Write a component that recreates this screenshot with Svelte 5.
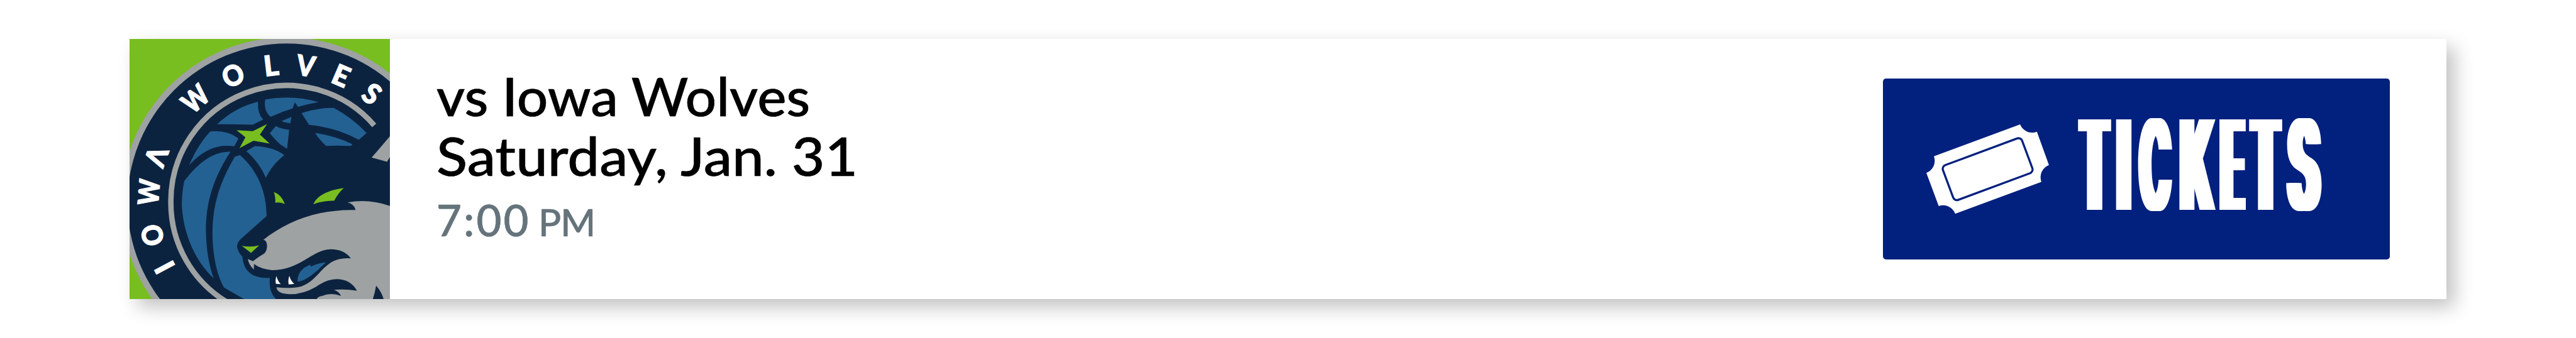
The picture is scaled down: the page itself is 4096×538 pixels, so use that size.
<script lang="ts">
  const event = {
    opponent: "vs Iowa Wolves",
    date: "Saturday, Jan. 31",
    time: "7:00",
    meridiem: "PM",
  };

  // letters around the badge, degrees clockwise from the top
  const letters = [
    { char: "I", angle: -117.9, stretch: 1 },
    { char: "O", angle: -103.6, stretch: 0.93 },
    { char: "W", angle: -85.6, stretch: 0.87 },
    { char: "Λ", angle: -70.5, stretch: 0.95 },
    { char: "W", angle: -41.3, stretch: 0.87 },
    { char: "O", angle: -22.9, stretch: 0.93 },
    { char: "L", angle: -6.5, stretch: 1 },
    { char: "V", angle: 8, stretch: 0.93 },
    { char: "E", angle: 23.2, stretch: 1 },
    { char: "S", angle: 38, stretch: 0.95 },
  ];

  // condensed lettering of the button
  const label = [
    { char: "T", width: 55, gap: 6.5, scale: 0.314 },
    { char: "I", width: 25, gap: 7.5, scale: 0.314 },
    { char: "C", width: 59, gap: 6, scale: 0.325, round: true },
    { char: "K", width: 60.5, gap: 5, scale: 0.36, round: true },
    { char: "E", width: 44, gap: 3.5, scale: 0.285 },
    { char: "T", width: 55, gap: 3.5, scale: 0.314 },
    { char: "S", width: 59, gap: 0, scale: 0.375, round: true },
  ];
</script>

<main>
  <div class="card">
    <svg class="logo" viewBox="33 46 1494 1466" preserveAspectRatio="none">
      <rect class="green" x="33" y="46" width="1494" height="1466" />
      <ellipse class="grey" cx="935" cy="969" rx="949" ry="932" />
      <ellipse class="navy" cx="935" cy="969" rx="914" ry="897" />
      <path
        class="ring"
        d="M1437 533A665 653 0 0 0 270 969A665 653 0 0 0 600 1534"
      />
      {#each letters as { char, angle, stretch }}
        <text
          class="letter"
          text-anchor="middle"
          transform="translate(935 969) scale(1.018 1) rotate({angle}) translate(0 -722) scale({stretch} 1)"
          >{char}</text
        >
      {/each}
      <g class="blue">
        <path d="M535 527Q640 430 770 400Q765 465 800 500L740 529Q640 526 535 527Z" />
        <path d="M812 387Q970 360 1117 402Q980 425 842 485Q800 450 812 387Z" />
        <path d="M905 509L962 485L956 521Q925 518 905 509Z" />
        <path d="M1020 464Q1110 433 1205 435Q1310 490 1393 576L1349 614Q1220 545 1063 530Z" />
        <path d="M1098 576Q1210 590 1311 639Q1308 650 1290 649Q1230 646 1161 649Q1120 612 1098 576Z" />
        <path d="M872 537Q905 553 949 558L937 665L900 642Q862 608 838 577Z" />
        <path d="M496 567Q590 558 658 606L634 651Q490 630 375 758Q425 640 496 567Z" />
        <path d="M703 678L753 650Q860 655 921 701Q850 755 815 829Q780 745 703 678Z" />
        <path d="M347 846Q480 675 612 682C520 820 470 960 471 1130Q475 1290 516 1395C400 1290 335 1120 333 970Q335 900 347 846Z" />
        <path d="M666 700C760 780 820 900 819 1045L670 1175Q640 1205 655 1235Q665 1260 680 1272Q690 1400 838 1393Q830 1470 872 1512L690 1512L575 1447C530 1370 508 1250 509 1130C512 960 560 840 637 710Z" />
      </g>
      <path class="navy" d="M981 403L1002 432L1020 464L962 485L968 440Z" />
      <g class="grey">
        <path d="M1422 714Q1480 650 1527 594L1527 712L1510 738Z" />
        <path
          d="M1284 968Q1400 945 1527 987L1527 1512L1491 1512Q1478 1470 1448 1437Q1440 1480 1429 1512L1108 1512Q1112 1498 1135 1495Q1190 1472 1246 1494Q1235 1470 1206 1460Q1270 1455 1338 1465Q1300 1400 1220 1400Q1160 1402 1100 1445Q1020 1490 940 1484Q880 1480 876 1446Q960 1455 1020 1440C1100 1410 1120 1350 1190 1305Q1240 1278 1303 1283Q1265 1230 1185 1231C1080 1235 1010 1350 850 1349Q790 1345 747 1315L746 1346Q715 1315 712 1286L741 1299Q770 1275 806 1255Q822 1240 822 1210Q820 1180 801 1178C930 1080 1100 1005 1330 1010Q1320 975 1284 968Z"
        />
      </g>
      <path
        class="blue"
        d="M997 1413Q995 1345 1072 1318L1072 1330Q1115 1307 1160 1306C1100 1360 1050 1410 997 1413Z"
      />
      <g class="white">
        <path d="M876 1382Q882 1410 901 1428L873 1426Q868 1405 876 1382Z" />
        <path d="M950 1381Q957 1408 978 1427L946 1430Q941 1405 950 1381Z" />
      </g>
      <g class="green">
        <path d="M647 560L740 566L822 526L781 585L837 636L744 620L664 661L698 600Z" />
        <path d="M861 908Q905 925 924 976Q895 965 869 969Q872 940 861 908Z" />
        <path d="M1087 978Q1120 905 1262 886Q1230 915 1207 958Q1150 955 1087 978Z" />
        <path d="M677 1212Q730 1222 777 1209L730 1252Z" />
      </g>
    </svg>

    <div class="details">
      <div class="opponent">{event.opponent}</div>
      <div class="date">{event.date}</div>
      <div class="time">{event.time} <small>{event.meridiem}</small></div>
    </div>

    <button class="tickets">
      <svg class="icon" viewBox="118 96 714 522">
        <path
          class="white"
          d="M162 282L664 96A76 76 0 0 0 762 139L832 333A76 76 0 0 0 788 431L286 617A76 76 0 0 0 190 572L118 379A76 76 0 0 0 162 282Z"
        />
        <rect
          class="outline"
          x="-246"
          y="-108"
          width="492"
          height="216"
          rx="23"
          transform="translate(475 357) rotate(-20.4)"
        />
      </svg>
      <span class="label">
        {#each label as { char, width, gap, scale, round }}<span
            class="slot"
            style="width: {width}px; margin-right: {gap}px"
            ><span class="glyph" class:round style="transform: scaleX({scale})"
              >{char}</span
            ></span
          >{/each}
      </span>
    </button>
  </div>
</main>

<style>
  :global(body) {
    background: #fff;
  }
  main {
    box-sizing: border-box;
    height: 538px;
    padding: 62px 206px 0;
    overflow: hidden;
  }
  .card {
    display: flex;
    align-items: flex-start;
    width: 3684px;
    height: 414px;
    background: #fff;
    box-shadow: 13px 13px 28px rgba(0, 0, 0, 0.24);
  }
  .logo {
    flex: none;
    width: 414px;
    height: 414px;
  }
  .green {
    fill: #78be20;
  }
  .grey {
    fill: #9ea2a2;
  }
  .navy {
    fill: #0c2340;
  }
  .blue {
    fill: #236192;
  }
  .white {
    fill: #fff;
  }
  .ring {
    fill: none;
    stroke: #9ea2a2;
    stroke-width: 31;
  }
  .letter {
    fill: #fff;
    stroke: #fff;
    stroke-width: 5;
    font: 900 159px Lato, sans-serif;
  }
  .details {
    flex: 1;
    padding: 43px 0 0 74px;
    color: #000;
    font: 500 85px/95px Lato, sans-serif;
    white-space: nowrap;
    -webkit-text-stroke: 0.6px;
  }
  .opponent,
  .date {
    width: max-content;
    transform-origin: left;
  }
  .opponent {
    transform: scaleX(1.027);
  }
  .date {
    transform: scaleX(1.066);
  }
  .time {
    margin-top: 7px;
    color: #65737b;
    font-size: 69px;
    letter-spacing: 3px;
    word-spacing: -8px;
  }
  small {
    font-size: 60px;
    letter-spacing: -1px;
  }
  .tickets {
    display: flex;
    align-items: center;
    width: 806px;
    height: 288px;
    margin: 63px 90px 0 0;
    padding: 0 0 0 69px;
    border: 0;
    border-radius: 5px;
    background: #02207e;
    color: #fff;
    cursor: pointer;
  }
  .icon {
    flex: none;
    width: 195px;
    height: 142.5px;
  }
  .outline {
    fill: none;
    stroke: #02207e;
    stroke-width: 12;
  }
  .label {
    display: flex;
    margin: -12px 0 0 45px;
    font: 500 197.5px/1 Inter, sans-serif;
  }
  .slot {
    display: flex;
    justify-content: center;
  }
  .glyph {
    flex: none;
    text-shadow:
      7px 0 #fff,
      -7px 0 #fff,
      14px 0 #fff,
      -14px 0 #fff,
      21px 0 #fff,
      -21px 0 #fff,
      28px 0 #fff,
      -28px 0 #fff;
  }
  .round {
    font-weight: 600;
    text-shadow:
      7px 0 #fff,
      -7px 0 #fff,
      14px 0 #fff,
      -14px 0 #fff,
      20px 0 #fff,
      -20px 0 #fff;
  }
</style>
